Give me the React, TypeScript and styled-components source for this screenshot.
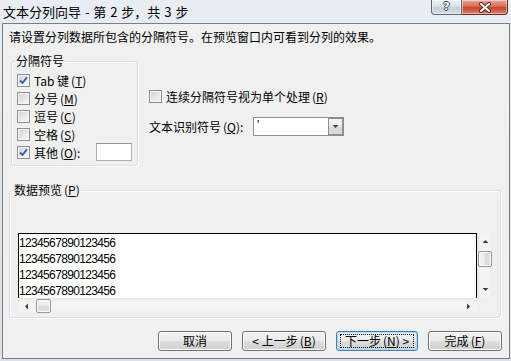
import React from "react";
import styled, { createGlobalStyle } from "styled-components";

const Global = createGlobalStyle`
  html, body { margin: 0; padding: 0; }
  body {
    width: 511px; height: 361px; overflow: hidden;
    font-family: "Noto Sans CJK SC", "Noto Sans", sans-serif;
    font-size: 12px; color: #000;
  }
  * { box-sizing: border-box; }
`;

const Window = styled.div`
  width: 511px; height: 361px;
  display: flex; flex-direction: column;
  background: linear-gradient(180deg, #e8eef3 0%, #dfe6ee 40%, #d9e2eb 100%);
`;

const TitleBar = styled.div`
  flex: none; height: 23px;
  display: flex; align-items: flex-start; justify-content: space-between;
`;

const Title = styled.div`
  font-size: 13px; line-height: 24px; padding-left: 3px; white-space: nowrap;
  word-spacing: 1px;
`;

const Caption = styled.div`
  display: flex; margin-right: 3px;
`;

const CaptionButton = styled.div<{ $close?: boolean }>`
  width: ${(p) => (p.$close ? 46 : 31)}px; height: 15px;
  display: flex; align-items: center; justify-content: center;
  border: 1px solid ${(p) => (p.$close ? "#6b2a20" : "#5c6a7a")};
  border-top: none;
  border-radius: ${(p) => (p.$close ? "0 0 4px 0" : "0 0 0 4px")};
  ${(p) => (p.$close ? "border-left: none;" : "")}
  background: ${(p) =>
    p.$close
      ? "linear-gradient(180deg, #eaa797 0%, #d66d57 45%, #c7432a 55%, #d9836a 100%)"
      : "linear-gradient(180deg, #eef2f6 0%, #d9e1e9 45%, #c2ceda 55%, #d3dce6 100%)"};
  box-shadow: inset 0 0 0 1px rgba(255,255,255,0.45);
`;

const HelpGlyph = styled.span`
  font-family: "DejaVu Sans", sans-serif; font-weight: bold; font-size: 11px; line-height: 14px;
  color: #fff;
  text-shadow: -1px 0 #3f4b58, 1px 0 #3f4b58, 0 -1px #3f4b58, 0 1px #3f4b58;
`;

const Client = styled.div`
  flex: 1; margin: 0 1px 2px 2px;
  border: 1px solid #7a7d82; background: #f0f0f0;
  display: flex; flex-direction: column;
  padding: 6px 7px 0 6px;
`;

const Intro = styled.div`
  line-height: 14px; white-space: nowrap;
`;

const TopRow = styled.div`
  display: flex; margin-top: 17px;
`;

const GroupBox = styled.div<{ $w: number; $h: number }>`
  position: relative; flex: none;
  width: ${(p) => p.$w}px; height: ${(p) => p.$h}px;
  border: 1px solid #d5dfe5; border-radius: 3px;
  box-shadow: inset 1px 1px 0 #fff, 1px 1px 0 #fff;
`;

const GroupLabel = styled.span`
  position: absolute; top: -8px; left: 3px;
  padding: 0 1px; line-height: 14px; background: #f0f0f0; white-space: nowrap;
`;

const DelimGroup = styled(GroupBox)`
  margin-left: 2px;
  display: flex; flex-direction: column;
  padding: 9px 5px 0 5px;
`;

const CheckRow = styled.label`
  height: 18px; display: flex; align-items: center; gap: 4px; white-space: nowrap;
`;

const Box = styled.span`
  flex: none; width: 13px; height: 13px;
  border: 1px solid #8e8f8f;
  background: linear-gradient(135deg, #cdd1d6 0%, #e4e6e8 50%, #f8f8f8 100%);
  box-shadow: inset 0 0 0 1px #f4f4f4;
  display: flex; align-items: center; justify-content: center;
`;

const SmallInput = styled.span`
  margin-left: auto; width: 36px; height: 18px;
  background: #fff; border: 1px solid #abadb3; border-top-color: #8f9399;
`;

const RightCol = styled.div`
  display: flex; flex-direction: column; margin-left: 11px;
`;

const RightCheck = styled(CheckRow)`
  height: 14px; margin-top: 28px;
`;

const QualRow = styled.div`
  display: flex; align-items: center; margin-top: 14px; height: 19px;
`;

const QualLabel = styled.span`
  width: 104px; white-space: nowrap;
`;

const Select = styled.div`
  width: 91px; height: 19px; background: #fff;
  border: 1px solid #8c8f95;
  display: flex; align-items: stretch; justify-content: space-between;
`;

const SelectValue = styled.span`
  padding-left: 3px; line-height: 15px; font-size: 12px; color: #000;
  font-family: "Liberation Sans", sans-serif;
`;

const DropBtn = styled.span`
  width: 15px;
  border: 1px solid #8b8b8b;
  background: linear-gradient(180deg, #f6f6f6 0%, #e7e7e7 50%, #d6d6d6 51%, #dcdcdc 100%);
  display: flex; align-items: center; justify-content: center;
`;

const PreviewGroup = styled(GroupBox)`
  margin-top: 24px;
  padding: 42px 7px 0 8px;
`;

const PreviewGrid = styled.div`
  display: grid;
  grid-template-columns: 459px 16px;
  grid-template-rows: 65px 16px;
`;

const DataBox = styled.div`
  background: #fff;
  border: 1px solid #000; border-bottom: none;
  overflow: hidden; padding-top: 1px;
`;

const DataLine = styled.div`
  height: 16px; line-height: 16px;
  font-family: "Liberation Sans", "Arial", sans-serif;
  font-size: 12px; letter-spacing: -0.65px; white-space: nowrap;
`;

const ScrollTrack = styled.div<{ $v?: boolean }>`
  display: flex; flex-direction: ${(p) => (p.$v ? "column" : "row")};
  background: ${(p) =>
    p.$v
      ? "linear-gradient(90deg, #e6e6e6 0%, #f4f4f4 25%, #f4f4f4 75%, #ececec 100%)"
      : "linear-gradient(180deg, #e6e6e6 0%, #f4f4f4 25%, #f4f4f4 75%, #ececec 100%)"};
`;

const ArrowBtn = styled.div<{ $v?: boolean }>`
  flex: none;
  width: ${(p) => (p.$v ? "16px" : "17px")};
  height: ${(p) => (p.$v ? "17px" : "16px")};
  display: flex; align-items: center; justify-content: center;
`;

const Thumb = styled.div<{ $v?: boolean }>`
  flex: none;
  width: ${(p) => (p.$v ? "14px" : "15px")};
  height: ${(p) => (p.$v ? "16px" : "14px")};
  margin: ${(p) => (p.$v ? "1px 1px 0 1px" : "1px 0 1px 1px")};
  border: 1px solid #979797; border-radius: 2px;
  background: ${(p) =>
    p.$v
      ? "linear-gradient(90deg, #f6f6f6 0%, #e9e9e9 50%, #d9d9d9 51%, #e2e2e2 100%)"
      : "linear-gradient(180deg, #f6f6f6 0%, #e9e9e9 50%, #d9d9d9 51%, #e2e2e2 100%)"};
  box-shadow: inset 0 0 0 1px #fbfbfb;
`;

const Spacer = styled.div` flex: 1; `;

const Corner = styled.div` background: #f0f0f0; `;

const ButtonRow = styled.div`
  display: flex; justify-content: flex-end; gap: 10px;
  margin-top: 13px;
`;

const Button = styled.div<{ $w: number; $default?: boolean }>`
  width: ${(p) => p.$w}px; height: 20px; position: relative;
  display: flex; align-items: center; justify-content: center;
  border: 1px solid ${(p) => (p.$default ? "#3c7fb1" : "#707070")};
  border-radius: 3px;
  background: linear-gradient(180deg, #f2f2f2 0%, #ebebeb 48%, #dddddd 52%, #cfcfcf 100%);
  box-shadow: inset 0 0 0 1px ${(p) => (p.$default ? "#a9dcf6" : "#fcfcfc")};
  white-space: pre; line-height: 14px;
`;

const FocusRing = styled.span`
  position: absolute; inset: 2px 3px;
  border: 1px dotted #000;
`;

const KeyText = styled.span`
  margin-left: 2px;
`;

const Key = ({ k }: { k: string }) => (
  <KeyText>
    (<u>{k}</u>)
  </KeyText>
);

const Check = () => (
  <svg width="9" height="9" viewBox="0 0 9 9">
    <path d="M1 4.5 L3.5 7 L8 1.2" fill="none" stroke="#3b58a8" strokeWidth="1.8" />
  </svg>
);

const CheckBox = ({ on }: { on?: boolean }) => <Box>{on ? <Check /> : null}</Box>;

const Tri = ({ dir }: { dir: "up" | "down" | "left" | "right" }) => {
  const pts = {
    up: "0.5,4 3.5,1 6.5,4",
    down: "0.5,1 3.5,4 6.5,1",
    left: "4,0.5 1,3.5 4,6.5",
    right: "1,0.5 4,3.5 1,6.5",
  }[dir];
  const v = dir === "up" || dir === "down";
  return (
    <svg width={v ? 7 : 5} height={v ? 5 : 7} viewBox={v ? "0 0 7 5" : "0 0 5 7"}>
      <polygon points={pts} fill="#404040" />
    </svg>
  );
};

const lines = ["1234567890123456", "1234567890123456", "1234567890123456", "1234567890123456"];

export default function App() {
  return (
    <>
      <Global />
      <Window>
        <TitleBar>
          <Title>文本分列向导 - 第 2 步，共 3 步</Title>
          <Caption>
            <CaptionButton>
              <HelpGlyph>?</HelpGlyph>
            </CaptionButton>
            <CaptionButton $close>
              <svg width="14" height="11" viewBox="0 0 14 11">
                <path d="M3 2 L11 9 M11 2 L3 9" stroke="#5a2a22" strokeWidth="4" strokeLinecap="round" />
                <path d="M3 2 L11 9 M11 2 L3 9" stroke="#fff" strokeWidth="2" strokeLinecap="round" />
              </svg>
            </CaptionButton>
          </Caption>
        </TitleBar>
        <Client>
          <Intro>请设置分列数据所包含的分隔符号。在预览窗口内可看到分列的效果。</Intro>
          <TopRow>
            <DelimGroup $w={127} $h={105}>
              <GroupLabel>分隔符号</GroupLabel>
              <CheckRow>
                <CheckBox on />
                <span>
                  Tab 键<Key k="T" />
                </span>
              </CheckRow>
              <CheckRow>
                <CheckBox />
                <span>
                  分号<Key k="M" />
                </span>
              </CheckRow>
              <CheckRow>
                <CheckBox />
                <span>
                  逗号<Key k="C" />
                </span>
              </CheckRow>
              <CheckRow>
                <CheckBox />
                <span>
                  空格<Key k="S" />
                </span>
              </CheckRow>
              <CheckRow>
                <CheckBox on />
                <span>
                  其他<Key k="O" />:
                </span>
                <SmallInput />
              </CheckRow>
            </DelimGroup>
            <RightCol>
              <RightCheck>
                <CheckBox />
                <span>
                  连续分隔符号视为单个处理<Key k="R" />
                </span>
              </RightCheck>
              <QualRow>
                <QualLabel>
                  文本识别符号<Key k="Q" />:
                </QualLabel>
                <Select>
                  <SelectValue>'</SelectValue>
                  <DropBtn>
                    <Tri dir="down" />
                  </DropBtn>
                </Select>
              </QualRow>
            </RightCol>
          </TopRow>
          <PreviewGroup $w={492} $h={128}>
            <GroupLabel>
              数据预览<Key k="P" />
            </GroupLabel>
            <PreviewGrid>
              <DataBox>
                {lines.map((l, i) => (
                  <DataLine key={i}>{l}</DataLine>
                ))}
              </DataBox>
              <ScrollTrack $v>
                <ArrowBtn $v>
                  <Tri dir="up" />
                </ArrowBtn>
                <Thumb $v />
                <Spacer />
                <ArrowBtn $v>
                  <Tri dir="down" />
                </ArrowBtn>
              </ScrollTrack>
              <ScrollTrack>
                <ArrowBtn>
                  <Tri dir="left" />
                </ArrowBtn>
                <Thumb />
                <Spacer />
                <ArrowBtn>
                  <Tri dir="right" />
                </ArrowBtn>
              </ScrollTrack>
              <Corner />
            </PreviewGrid>
          </PreviewGroup>
          <ButtonRow>
            <Button $w={74}>取消</Button>
            <Button $w={84}>
              {"< 上一步"}
              <Key k="B" />
            </Button>
            <Button $w={82} $default>
              <FocusRing />
              {"下一步"}
              <Key k="N" />
              {" >"}
            </Button>
            <Button $w={74}>
              完成<Key k="F" />
            </Button>
          </ButtonRow>
        </Client>
      </Window>
    </>
  );
}
